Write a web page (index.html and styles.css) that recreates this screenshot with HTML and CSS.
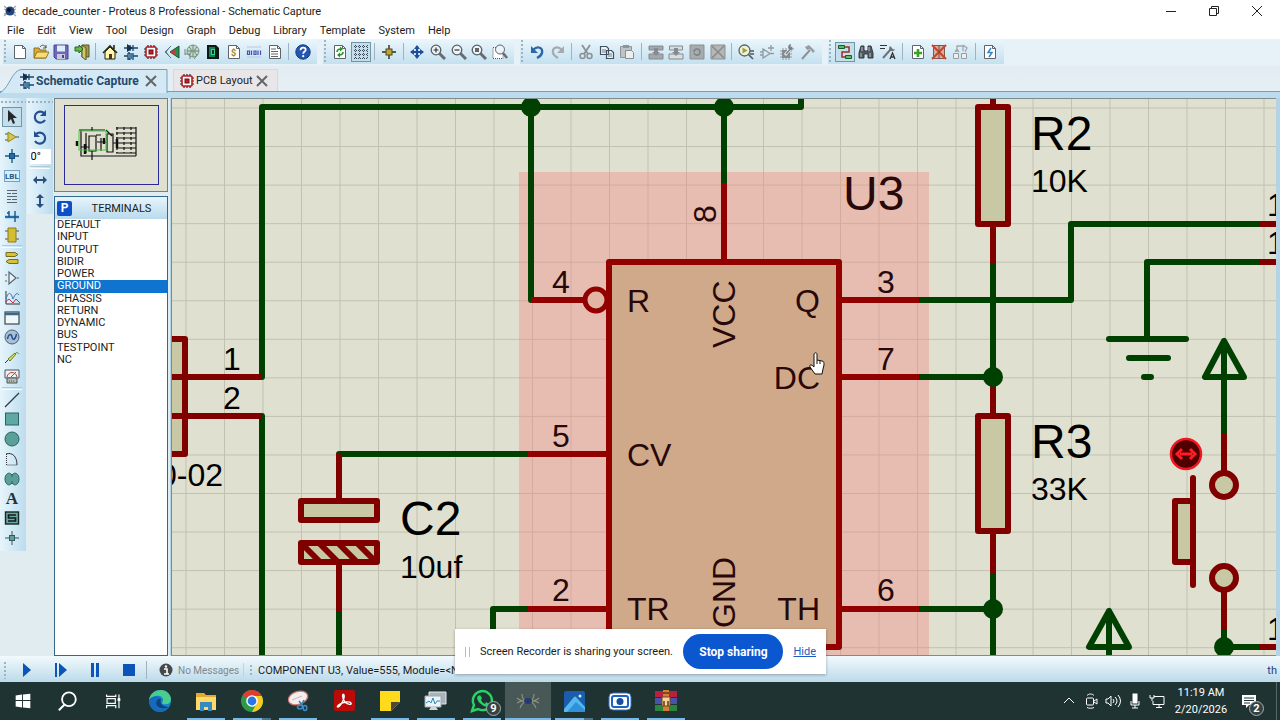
FILE: index.html
```html
<!DOCTYPE html>
<html lang="en">
<head>
    <meta charset="UTF-8">
    <title>decade_counter - Proteus 8 Professional - Schematic Capture</title>
    <link rel="stylesheet" href="styles.css">
</head>
<body>
<svg class="defs" width="0" height="0">
    <symbol id="parts" viewBox="0 0 16 16"><path d="M1 4h14M7 1v6M10 1v6M5 9v7M7 9v7M10 9v7M1 12h4M10 12h5M5 9h2M5 15h2" stroke="#1d4468" stroke-width="1.3" fill="none"/><path d="M4 0l6 4-6 4z" fill="#14304c"/><path d="M8 9h2v6H8z" fill="#2f7fb0"/></symbol>
    <symbol id="chip" viewBox="0 0 16 16"><path d="M5 1v14M8 1v14M11 1v14M1 5h14M1 8h14M1 11h14" stroke="#302020" stroke-width="1.2"/><rect x="3" y="3" width="10" height="10" rx="1" fill="#fff" stroke="#b41824" stroke-width="1.6"/><rect x="6" y="6" width="4" height="4" fill="#c41c2c" stroke="#701010"/></symbol>
    <symbol id="glass" viewBox="0 0 16 16"><path d="M9 9l6 6" stroke="#676c72" stroke-width="3"/><circle cx="6" cy="6" r="4.800" fill="#edf4f8" stroke="#596066" stroke-width="1.3"/></symbol>
    <symbol id="page" viewBox="0 0 16 16"><path d="M2.500 1.500h8l3 3v10h-11z" fill="#fff" stroke="#606468"/><path d="M10.500 1.500v3h3" fill="none" stroke="#606468"/></symbol>
</svg>
<header class="titlebar">
    <svg class="icon" viewBox="0 0 16 16"><path d="M2 3l12 10M14 3L2 13M2 6l12 4M2 11l12-5" stroke="#9aa8b4" stroke-width="1.3"/><circle cx="8" cy="8" r="4.500" fill="#23447c"/><circle cx="7" cy="7" r="2" fill="#0a1838"/></svg>
    <h1>decade_counter - Proteus 8 Professional - Schematic Capture</h1>
    <div class="window-buttons">
        <button aria-label="Minimize"><svg viewBox="0 0 10 10"><path d="M0 5.500h10"/></svg></button>
        <button aria-label="Restore"><svg viewBox="0 0 10 10"><path d="M.5 2.500h7v7h-7zM2.500 2.500v-2h7v7h-2"/></svg></button>
        <button aria-label="Close"><svg viewBox="0 0 10 10"><path d="M0 0l10 10M10 0L0 10"/></svg></button>
    </div>
</header>
<nav class="menu">
    <button>File</button><button>Edit</button><button>View</button><button>Tool</button><button>Design</button><button>Graph</button><button>Debug</button><button>Library</button><button>Template</button><button>System</button><button>Help</button>
</nav>

<div class="toolbars">
    <div class="tools tools-project">
        <button aria-label="New"><svg class="icon" viewBox="0 0 16 16"><use href="#page"/></svg></button>
        <button aria-label="Open"><svg class="icon" viewBox="0 0 16 16"><path d="M1 14V4h5l1 2h6v8z" fill="#d9ab35" stroke="#90701c"/><path d="M1 14l3-6h12l-3 6z" fill="#f8dc78" stroke="#96741e"/><path d="M7 3c2-3 5-2 6 1M13 1v3h-3" fill="none" stroke="#555"/></svg></button>
        <button aria-label="Save"><svg class="icon" viewBox="0 0 16 16"><path d="M1 1h14v14H3l-2-2z" fill="#7068b4" stroke="#4a4494"/><path d="M4 1.500h8v6H4z" fill="#dceefa"/><path d="M4 10h8v5H4z" fill="#c8c8de"/><path d="M9 11h2v3H9z" fill="#484090"/></svg></button>
        <button aria-label="Import"><svg class="icon" viewBox="0 0 16 16"><path d="M8 1h7v12H8z" fill="#a09a48" stroke="#555428"/><path d="M8 1l4 3v12l-4-3z" fill="#d0c86a" stroke="#555428"/><path d="M1 3h4V1l4 4-4 4V7H1z" fill="#68b848" stroke="#2d6520"/></svg></button>
        <span class="sep"></span>
        <button aria-label="Home"><svg class="icon" viewBox="0 0 16 16"><path d="M3 8v7h10V8L8 3z" fill="#fff6b0" stroke="#25200c"/><path d="M1 9l7-7 7 7M12 5V1" fill="none" stroke="#302b12" stroke-width="1.600"/><path d="M7 10h3v5H7z" fill="#473818"/></svg></button>
        <button aria-label="Schematic"><svg class="icon"><use href="#parts"/></svg></button>
        <button aria-label="PCB"><svg class="icon"><use href="#chip"/></svg></button>
        <button aria-label="3D view"><svg class="icon" viewBox="0 0 16 16"><path d="M7 2L1 8l6 6M5 4L2 8l3 4" fill="none" stroke="#5c7088"/><path d="M6 8l9-6v12z" fill="#259048" stroke="#245038"/><path d="M6 8l5-2v5z" fill="#c83838"/></svg></button>
        <button aria-label="Gerber"><svg class="icon" viewBox="0 0 16 16"><circle cx="9" cy="7" r="6" fill="#c5d8cc" stroke="#7d9485"/><path d="M3 7h12M9 1v12M5 3c3 2 3 6 0 8M13 3c-3 2-3 6 0 8M1 10h5v5M1 5v6M10 15l4-5" fill="none" stroke="#6b8a78"/></svg></button>
        <button aria-label="Design explorer"><svg class="icon" viewBox="0 0 16 16"><path d="M2 1h9l3 3v11H2z" fill="#101814"/><path d="M4 3h6v10H4z" fill="#12825c"/><path d="M6 5h4v6H6z" fill="#30d890"/><path d="M7 6h2v4H7z" fill="#103828"/></svg></button>
        <button aria-label="Bill of materials"><svg class="icon" viewBox="0 0 16 16"><use href="#page"/><text x="5" y="12" class="dollar">$</text></svg></button>
        <button aria-label="Source code"><svg class="icon" viewBox="0 0 16 16"><path d="M1 3h14M1 13h14" stroke="#b8c8dc"/><path d="M1.500 7h2v3.500h-2zM5.500 6.500v4.500M8 7h2v3.500H8zM12 6.500v4.500M14.500 6.500v4.500" fill="none" stroke="#4850b0" stroke-width="1.200"/></svg></button>
        <button aria-label="Project notes"><svg class="icon" viewBox="0 0 16 16"><use href="#page"/><path d="M4 5h5M4 7.500h7M4 10h7M4 12.500h7" stroke="#666"/></svg></button>
        <span class="sep"></span>
        <button aria-label="Help"><svg class="icon" viewBox="0 0 16 16"><circle cx="8" cy="8" r="7.200" fill="#2356b4" stroke="#173878"/><path d="M5.500 6.200c0-3.600 5.200-3.200 5.200-.4 0 1.600-2.500 1.800-2.500 3.900" fill="none" stroke="#fff" stroke-width="1.800"/><circle cx="8.200" cy="12.200" r="1.100" fill="#fff"/></svg></button>
    </div>
    <div class="tools tools-view">
        <button aria-label="Redraw"><svg class="icon" viewBox="0 0 16 16"><use href="#page"/><path d="M5 8c0-3 2-3 4-3M11 8c0 3-2 3-4 3" fill="none" stroke="#269428" stroke-width="1.600"/><path d="M8 2.500L11 5 8 7.500zM8 8.500L5 11l3 2.500z" fill="#269428"/></svg></button>
        <button class="active" aria-label="Grid"><svg class="icon" viewBox="0 0 16 16"><path d="M1 2.500h14M1 6.500h14M1 10.500h14M1 14.500h14M2.500 1v14M6.500 1v14M10.500 1v14M14.500 1v14" stroke="#384858" stroke-dasharray="1 1"/></svg></button>
        <span class="sep"></span>
        <button aria-label="Origin"><svg class="icon" viewBox="0 0 16 16"><path d="M8 1v14M1 8h14" stroke="#302c18" stroke-width="1.400"/><rect x="5" y="5" width="6" height="6" fill="#bda632" stroke="#50481c"/></svg></button>
        <span class="sep"></span>
        <button aria-label="Pan"><svg class="icon" viewBox="0 0 16 16"><path d="M8 2v12M2 8h12" stroke="#1d4d9c" stroke-width="2.200"/><path d="M8 1l3 4H5zM8 15l3-4H5zM1 8l4-3v6zM15 8l-4-3v6z" fill="#1d4d9c"/></svg></button>
        <button aria-label="Zoom in"><svg class="icon" viewBox="0 0 16 16"><use href="#glass"/><path d="M3.500 6h5M6 3.500v5" stroke="#333" stroke-width="1.200"/></svg></button>
        <button aria-label="Zoom out"><svg class="icon" viewBox="0 0 16 16"><use href="#glass"/><path d="M3.500 6h5" stroke="#333" stroke-width="1.200"/></svg></button>
        <button aria-label="Zoom all"><svg class="icon" viewBox="0 0 16 16"><use href="#glass"/><rect x="4" y="4" width="4" height="4" fill="#666"/></svg></button>
        <button aria-label="Zoom area"><svg class="icon" viewBox="0 0 16 16"><path d="M1 3.500h10v11H1z" fill="#fff" stroke="#555" stroke-dasharray="1 1"/><path d="M11 9l4 5" stroke="#676c72" stroke-width="2.500"/><circle cx="8" cy="5.500" r="4.500" fill="#edf4f8" stroke="#596066"/></svg></button>
    </div>
    <div class="tools tools-edit">
        <button aria-label="Undo"><svg class="icon" viewBox="0 0 16 16"><path d="M4 6c5-5 10-2 9 3-1 3-3 4-5 5" fill="none" stroke="#2c67a8" stroke-width="2.400"/><path d="M2 2v7h7z" fill="#2c67a8"/></svg></button>
        <button aria-label="Redo"><svg class="icon" viewBox="0 0 16 16"><path d="M12 6C7 1 2 4 3 9c1 3 3 4 5 5" fill="none" stroke="#a3abb0" stroke-width="2.200"/><path d="M14 2v7H7z" fill="#a3abb0"/></svg></button>
        <span class="sep"></span>
        <button aria-label="Cut"><svg class="icon" viewBox="0 0 16 16"><path d="M4 1l6 9M12 1L6 10" stroke="#8a9094" stroke-width="1.800"/><circle cx="4.500" cy="12" r="2.500" fill="none" stroke="#8a9094" stroke-width="1.500"/><circle cx="11.500" cy="12" r="2.500" fill="none" stroke="#8a9094" stroke-width="1.500"/></svg></button>
        <button aria-label="Copy"><svg class="icon" viewBox="0 0 16 16"><path d="M1.500 2.500h6l2 2v6h-8zM7.500 6.500h5l2 2v6h-7z" fill="#eef3f6" stroke="#3f5060" stroke-width="1.200"/><path d="M3 6h4M3 8h4M9 10h4M9 12h4" stroke="#6d7c88"/></svg></button>
        <button aria-label="Paste"><svg class="icon" viewBox="0 0 16 16"><path d="M1.500 2.500h11v11h-11z" fill="#bfc3c3" stroke="#90969a"/><path d="M4 1h6v3H4z" fill="#8e9498"/><path d="M6.500 6.500h6l2 2v6h-8z" fill="#eee" stroke="#888e92"/></svg></button>
        <span class="sep"></span>
        <button aria-label="Block copy"><svg class="icon" viewBox="0 0 16 16"><path d="M1 2h14v4H1zM1 10h14v5H1z" fill="#a2a8ac" stroke="#848a8e"/><path d="M6 4h4v4h2l-4 4-4-4h2z" fill="#858b90"/></svg></button>
        <button aria-label="Block move"><svg class="icon" viewBox="0 0 16 16"><path d="M1.500 2h13v4h-13zM1 10h14v5H1z" fill="#d9dee0" stroke="#848a8e"/><path d="M6 4h4v4h2l-4 4-4-4h2z" fill="#858b90"/></svg></button>
        <button aria-label="Block rotate"><svg class="icon" viewBox="0 0 16 16"><path d="M1 1h14v14H1z" fill="#a7acaf" stroke="#8a8f93"/><path d="M5 8c0-4 6-4 6 0s-5 4-6 1" fill="none" stroke="#7d8387" stroke-width="1.600"/></svg></button>
        <button aria-label="Block delete"><svg class="icon" viewBox="0 0 16 16"><path d="M1 1h14v14H1z" fill="#b5b7b6" stroke="#8a8f93"/><path d="M2 2l12 12M14 2L2 14" stroke="#8b8b88" stroke-width="1.600"/></svg></button>
        <span class="sep"></span>
        <button aria-label="Pick parts"><svg class="icon" viewBox="0 0 16 16"><path d="M10 10l5 5M12 7h4M12 10h4" stroke="#50585e" stroke-width="1.600"/><circle cx="6.500" cy="6.500" r="5.500" fill="#edf2da" stroke="#59646a" stroke-width="1.300"/><path d="M4.500 3.500l5 3-5 3z" fill="#9aa232"/></svg></button>
        <button aria-label="Make device"><svg class="icon" viewBox="0 0 16 16"><path d="M4 5v9l7-4.500zM1 8h3M1 11h3M11 9.500h4M12 1v6M9 4h6" fill="none" stroke="#929aa0" stroke-width="1.300"/></svg></button>
        <button aria-label="Packaging tool"><svg class="icon" viewBox="0 0 16 16"><path d="M4 4v12M7 4v12M10 5v11M1 7h12M1 10h12M1 13h12" stroke="#92989c"/><path d="M3 6h8v8H3z" fill="#858b90"/><path d="M6 11l7-8" stroke="#e5e8e9" stroke-width="3"/><path d="M7 10l6-7" stroke="#80868a" stroke-width="1.500"/><path d="M12 0a3 3 0 103 4l-2 .5L11.500 3z" fill="#777e84"/></svg></button>
        <button aria-label="Decompose"><svg class="icon" viewBox="0 0 16 16"><path d="M2 15l8-9" stroke="#8d9296" stroke-width="2"/><path d="M5 3l4-2 6 6-2 2-3-4-3 1z" fill="#969ca0"/></svg></button>
    </div>
    <div class="tools tools-design">
        <button class="active" aria-label="Wire autorouter"><svg class="icon" viewBox="0 0 16 16"><path d="M6 3h6v5H5v5h6" fill="none" stroke="#a02c28" stroke-width="1.500"/><path d="M1.500 1.500h6v3h-6zM8.500 11.500h6v3h-6z" fill="#58c060" stroke="#185c28"/></svg></button>
        <button aria-label="Search"><svg class="icon" viewBox="0 0 16 16"><path d="M3 2h3v4l1 1h2l1-1V2h3l2 7v5h-5v-4H6v4H1V9z" fill="#4f5860" stroke="#343b42"/><path d="M3 9v4M12 9v4M4 3v4M11 3v4" stroke="#bcc4ca"/></svg></button>
        <button aria-label="Property tool"><svg class="icon" viewBox="0 0 16 16"><path d="M0 1.500h7M0 4.500h5" stroke="#333"/><path d="M3 14l8-9" stroke="#6c7276" stroke-width="2"/><path d="M10 2a3 3 0 105 3l-2 .5L12 4z" fill="#6c7276"/><path d="M10 15l2.500-6 2.500 6M11 13h3" fill="none" stroke="#333" stroke-width="1.300"/></svg></button>
        <span class="sep"></span>
        <button aria-label="New sheet"><svg class="icon" viewBox="0 0 16 16"><use href="#page"/><path d="M8 5v8M4 9h8" stroke="#36a423" stroke-width="2.600"/></svg></button>
        <button aria-label="Remove sheet"><svg class="icon" viewBox="0 0 16 16"><path d="M2.500 1.500h11v13h-11z" fill="#d8ae9a" stroke="#80584c"/><path d="M1 1l14 14M15 1L1 15" stroke="#c9442c" stroke-width="2"/><path d="M8 1v14" stroke="#90412e"/></svg></button>
        <button aria-label="Exit to parent"><svg class="icon" viewBox="0 0 16 16"><path d="M5 8V2h6v5M3 8l2-3 2 3M11 1l4 3-2 4" fill="none" stroke="#a0a6a9" stroke-width="1.300"/><path d="M1.500 9.500h5v5h-5zM9.500 9.500h5v5h-5z" fill="#eee" stroke="#979da0"/></svg></button>
        <span class="sep"></span>
        <button aria-label="Electrical rules"><svg class="icon" viewBox="0 0 16 16"><use href="#page"/><path d="M9 4L6 8.500h4L7 13" fill="none" stroke="#3488c8" stroke-width="1.500"/></svg></button>
    </div>
</div>

<div class="tabs">
    <div class="tab tab-current">
        <svg class="tab-shape" viewBox="0 0 168 24" preserveAspectRatio="none"><path d="M0 24C10 18 12 .5 22 .5H167V24" fill="#d4e9f5" stroke="#6fa0c0"/></svg>
        <svg class="icon"><use href="#parts"/></svg>
        <a href="#schematic">Schematic Capture</a>
        <button class="tab-close" aria-label="Close Schematic Capture"><svg viewBox="0 0 12 12"><path d="M1 1l10 10M11 1L1 11"/></svg></button>
    </div>
    <div class="tab tab-other">
        <svg class="icon"><use href="#chip"/></svg>
        <a href="#pcb">PCB Layout</a>
        <button class="tab-close" aria-label="Close PCB Layout"><svg viewBox="0 0 12 12"><path d="M1 1l10 10M11 1L1 11"/></svg></button>
    </div>
</div>

<main class="workspace">
    <div class="modes">
        <button class="active" aria-label="Selection"><svg class="icon" viewBox="0 0 16 16"><path d="M4 1v12l3-3 2 5 2-1-2-5h4z" fill="#24282c"/></svg></button>
        <button aria-label="Component"><svg class="icon" viewBox="0 0 16 16"><path d="M1 5h3M1 11h3M12 8h3" stroke="#5a5418"/><path d="M4 3l8 5-8 5z" fill="#d6c648" stroke="#948522"/></svg></button>
        <button aria-label="Junction"><svg class="icon" viewBox="0 0 16 16"><path d="M8 1v14M1 8h14" stroke="#1d5a80" stroke-width="1.400"/><rect x="5.500" y="5.500" width="5" height="5" fill="#1f6cac" stroke="#164a78"/></svg></button>
        <button aria-label="Wire label"><svg class="icon" viewBox="0 0 16 16"><rect x=".5" y="2.500" width="15" height="11" fill="#d9edf8" stroke="#1a5782" stroke-dasharray="1 1"/><text x="1" y="11" class="lbl">LBL</text></svg></button>
        <button aria-label="Text script"><svg class="icon" viewBox="0 0 16 16"><path d="M3 2.500h10M3 5.500h4M8 5.500h5M3 8.500h10M3 11.500h4M8 11.500h5M3 14.500h10" stroke="#5b656b" stroke-width="1.200"/></svg></button>
        <button aria-label="Bus"><svg class="icon" viewBox="0 0 16 16"><path d="M1 9h14" stroke="#1e70b0" stroke-width="2.400"/><path d="M5 3v6M11 3v11M3 5h2" stroke="#1a5480" stroke-width="1.400"/></svg></button>
        <button aria-label="Subcircuit"><svg class="icon" viewBox="0 0 16 16"><path d="M1 4h14M1 12h14" stroke="#555"/><path d="M4 1h8v14H4z" fill="#d2be30" stroke="#8a7820"/></svg></button>
        <span class="rule"></span>
        <button aria-label="Terminals"><svg class="icon" viewBox="0 0 16 16"><path d="M2 2.500h9l3 2-3 2H2zM5 9.500h9v4H5l-3-2z" fill="#d4c23a" stroke="#786b1c"/></svg></button>
        <button aria-label="Device pins"><svg class="icon" viewBox="0 0 16 16"><path d="M5 2v12l7-6zM1 5h2M1 11h2M13 8h2" fill="#e6f2f8" stroke="#58646c" stroke-width="1.200"/></svg></button>
        <button aria-label="Graph"><svg class="icon" viewBox="0 0 16 16"><path d="M2 1v13h14" fill="none" stroke="#333"/><path d="M2 9c3-9 5-6 7 0 2-5 4-7 6-4" fill="none" stroke="#3378a8"/><path d="M1 12l4-3 4 4 3-4 4 4" fill="none" stroke="#c22f46"/></svg></button>
        <button aria-label="Active popup"><svg class="icon" viewBox="0 0 16 16"><rect x="1" y="2" width="14" height="12" fill="#f1f6f8" stroke="#3b4850" stroke-width="1.200"/><path d="M1 4h14" stroke="#34698c" stroke-width="2.500"/></svg></button>
        <button aria-label="Generator"><svg class="icon" viewBox="0 0 16 16"><circle cx="8" cy="8" r="7" fill="#a8bfd4" stroke="#50606c"/><path d="M3.500 10c1-6 4-5 4.500-2s3 4 4.500-3" fill="none" stroke="#214d9c" stroke-width="1.500"/></svg></button>
        <button aria-label="Probe"><svg class="icon" viewBox="0 0 16 16"><path d="M1 14l4-4" stroke="#333"/><path d="M4 10l7-6 1 1-6 7z" fill="#e0e059" stroke="#6c7830"/><path d="M12 4c2-2 2 2 3 0" fill="none" stroke="#4b8f30"/></svg></button>
        <button aria-label="Instruments"><svg class="icon" viewBox="0 0 16 16"><path d="M1 1h14v8H1z" fill="#e9f2f5" stroke="#4a555c"/><path d="M3 8c1-6 9-6 10 0M7 8l5-5" fill="none" stroke="#ba3e34"/><path d="M3 9h10v5H3z" fill="#b5bcae" stroke="#4a555c"/><path d="M5 12h6" stroke="#555" stroke-dasharray="1 1"/></svg></button>
        <span class="rule"></span>
        <button aria-label="Line"><svg class="icon" viewBox="0 0 16 16"><path d="M1 15L15 1" stroke="#31383c" stroke-width="1.200"/></svg></button>
        <button aria-label="Box"><svg class="icon" viewBox="0 0 16 16"><rect x="1.500" y="2" width="13" height="12" fill="#5fa9a4" stroke="#2c6260"/></svg></button>
        <button aria-label="Circle"><svg class="icon" viewBox="0 0 16 16"><circle cx="8" cy="8" r="7" fill="#5a9f98" stroke="#2c6260"/></svg></button>
        <button aria-label="Arc"><svg class="icon" viewBox="0 0 16 16"><path d="M2 3c6-2 11 2 11 11" fill="none" stroke="#333"/><path d="M2.500 3v11H13" fill="none" stroke="#333" stroke-dasharray="1 1"/></svg></button>
        <button aria-label="Path"><svg class="icon" viewBox="0 0 16 16"><path d="M8 4c3-4 7-1 7 4s-4 8-7 4c-3 4-7 1-7-4s4-8 7-4z" fill="#5a9f98" stroke="#2c6260"/><path d="M8 4v2M8 10v2" stroke="#2c6260"/></svg></button>
        <button aria-label="Text" class="serif-a">A</button>
        <button aria-label="Symbol"><svg class="icon" viewBox="0 0 16 16"><rect x="1.500" y="2" width="13" height="12" fill="#6ba7a2" stroke="#142826" stroke-width="1.400"/><path d="M12 5H4.500v3h7v3H4" fill="none" stroke="#101c1c" stroke-width="1.600"/></svg></button>
        <button aria-label="Marker"><svg class="icon" viewBox="0 0 16 16"><path d="M8 1v14M1 8h14" stroke="#35585a"/><rect x="5.500" y="5.500" width="5" height="5" fill="#5aa29c" stroke="#35585a"/></svg></button>
    </div>

    <div class="rotate">
        <button aria-label="Rotate clockwise"><svg class="icon" viewBox="0 0 16 16"><path d="M13 11a5.500 5.500 0 11-1-7" fill="none" stroke="#264f92" stroke-width="2.200"/><path d="M14 1v6H8z" fill="#264f92"/></svg></button>
        <button aria-label="Rotate anticlockwise"><svg class="icon" viewBox="0 0 16 16"><path d="M3 11a5.500 5.500 0 101-7" fill="none" stroke="#264f92" stroke-width="2.200"/><path d="M2 1v6h6z" fill="#264f92"/></svg></button>
        <input type="text" value="0°" aria-label="Angle">
        <span class="rule"></span>
        <button aria-label="Mirror horizontally"><svg class="icon" viewBox="0 0 16 16"><path d="M4 8h8" stroke="#2d4f80" stroke-width="2"/><path d="M1 8l4-4v8zM15 8l-4-4v8z" fill="#2d4f80"/></svg></button>
        <button aria-label="Mirror vertically"><svg class="icon" viewBox="0 0 16 16"><path d="M8 4v8" stroke="#2d4f80" stroke-width="2"/><path d="M8 1l4 4H4zM8 15l4-4H4z" fill="#2d4f80"/></svg></button>
    </div>

    <aside class="side">
        <div class="overview">
            <svg viewBox="0 0 112 92">
                <rect x="9.500" y="6.500" width="94" height="79" fill="none" stroke="#2a2a9c"/>
                <g fill="none" stroke="#111" stroke-width="1.200">
                    <path d="M24 31h26M26 31v26h55M34 37h7v15h-7zM26 48h8M37 28v4M37 52v9M42 43h9M46 39v13M52 35h6v18h-6zM51 31l6 6M58 44h4M31 34v20M41 36h5"/>
                    <path d="M81 28v29M61 29h20M61 34h20M61 39h20M61 44h20M61 49h20M61 54h20"/>
                    <path d="M62 28v26M69 28v26M76 28v26" stroke-dasharray="3 2"/>
                    <path d="M22 42v5M30 45v10M49 39v6M62 40v9" stroke-width="2.500"/>
                </g>
                <rect x="24" y="32" width="27" height="19" fill="none" stroke="#45c845"/>
            </svg>
        </div>
        <section class="picker">
            <h2><button aria-label="Pick devices">P</button><span>TERMINALS</span></h2>
            <ul role="listbox" aria-label="Terminals">
                <li role="option">DEFAULT</li>
                <li role="option">INPUT</li>
                <li role="option">OUTPUT</li>
                <li role="option">BIDIR</li>
                <li role="option">POWER</li>
                <li role="option" class="selected" aria-selected="true">GROUND</li>
                <li role="option">CHASSIS</li>
                <li role="option">RETURN</li>
                <li role="option">DYNAMIC</li>
                <li role="option">BUS</li>
                <li role="option">TESTPOINT</li>
                <li role="option">NC</li>
            </ul>
        </section>
    </aside>

    <div class="sheet" id="schematic">
        <svg width="100%" height="100%">
            <defs>
                <pattern id="grid" x="13.500" y="8.500" width="38.500" height="38.550" patternUnits="userSpaceOnUse"><path d="M.5 0v39M0 .5h39" stroke="#bfc1b1" fill="none"/></pattern>
            </defs>
            <rect width="100%" height="100%" fill="url(#grid)"/>
            <g transform="translate(-172 -99)">
                <!-- selected part -->
                <rect class="highlight" x="519" y="172" width="410" height="600"/>
                <!-- wires -->
                <g class="wire">
                    <path d="M262 377V107H801V90M531 107V300M724 107V183"/>
                    <path d="M262 416V800M339 454H528M339 612V800M493 800V609H528"/>
                    <path d="M919 300H1071V224H1260M1147 339V262H1260"/>
                    <path d="M919 377H993M993 264V377M919 609H993M993 573V800"/>
                    <path d="M1109 339H1186M1129 358H1168M1144 377H1151"/>
                    <path d="M1224 341V433M1224 341L1205 377H1244ZM1109 611V800M1109 611L1089 647H1129Z"/>
                    <path d="M1224 630V647H1260"/>
                </g>
                <!-- parts and pins -->
                <g class="part">
                    <path d="M150 339H185V454H150Z"/>
                    <path d="M150 377H262M150 416H262"/>
                    <path d="M339 500V454M339 563V612"/>
                    <rect x="301" y="501" width="76" height="19"/>
                    <rect x="301" y="543" width="76" height="19"/>
                    <path class="hatch" d="M301 543l20 20M319 543l20 20M338 543l20 20M357 543l20 20"/>
                    <path d="M993 90V107M993 224V264M993 377V415M993 532V573"/>
                    <rect x="978" y="107" width="30" height="117"/>
                    <rect x="978" y="416" width="30" height="115"/>
                    <path d="M1260 224H1300M1260 262H1300M1260 647H1300"/>
                    <path d="M1224 433V474M1224 589V630"/>
                    <circle cx="1224" cy="485" r="12"/>
                    <circle cx="1224" cy="578" r="12"/>
                    <rect x="1175" y="501" width="18" height="61"/>
                    <path d="M1193 478V585" stroke-linecap="round"/>
                </g>
                <g class="part part-selected">
                    <rect x="609" y="262" width="230" height="385"/>
                    <path d="M724 183V262M531 300H584M528 454H609M528 609H609"/>
                    <path d="M839 300H919M839 377H919M839 609H919"/>
                    <circle class="bubble" cx="596" cy="300" r="11"/>
                </g>
                <g class="dot">
                    <circle cx="531" cy="107" r="10"/>
                    <circle cx="724" cy="107" r="10"/>
                    <circle cx="993" cy="377" r="10"/>
                    <circle cx="993" cy="609" r="10"/>
                    <circle cx="1224" cy="647" r="10"/>
                </g>
                <!-- switch actuator -->
                <circle cx="1186" cy="454" r="15" fill="#500000" stroke="#f01820" stroke-width="2.500"/>
                <path d="M1180 454h12M1182 449l-5 5 5 5M1190 449l5 5-5 5" fill="none" stroke="#ff1c24" stroke-width="3"/>
                <!-- labels -->
                <g class="name">
                    <text x="1031" y="150">R2</text>
                    <text x="1031" y="458">R3</text>
                    <text x="400" y="535">C2</text>
                    <text x="843" y="210" class="brown">U3</text>
                </g>
                <g class="value">
                    <text x="1031" y="192">10K</text>
                    <text x="1031" y="500">33K</text>
                    <text x="400" y="578">10uf</text>
                    <text x="223" y="370">1</text>
                    <text x="223" y="409">2</text>
                    <text x="159" y="486">0-02</text>
                    <text x="1267" y="216">1</text>
                    <text x="1267" y="254">1</text>
                    <text x="1267" y="640">1</text>
                </g>
                <g class="value brown">
                    <text x="552" y="293">4</text>
                    <text x="552" y="447">5</text>
                    <text x="552" y="601">2</text>
                    <text x="877" y="293">3</text>
                    <text x="877" y="370">7</text>
                    <text x="877" y="601">6</text>
                    <text x="627" y="312">R</text>
                    <text x="627" y="466">CV</text>
                    <text x="627" y="620">TR</text>
                    <text x="820" y="312" text-anchor="end">Q</text>
                    <text x="820" y="389" text-anchor="end">DC</text>
                    <text x="820" y="620" text-anchor="end">TH</text>
                    <text transform="translate(716 223) rotate(-90)">8</text>
                    <text transform="translate(735 348) rotate(-90)">VCC</text>
                    <text transform="translate(735 628) rotate(-90)">GND</text>
                </g>
                <path d="M814 354c1-2 3-1 3 0v6l5 1c2 0 2 2 2 4l-1 4-1 5h-7l-5-7c-1-2 1-3 3-1l1 1z" fill="#fff" stroke="#111"/>
                <path d="M817 360v4M820 361v3" stroke="#111"/>
            </g>
        </svg>
    </div>
</main>

<footer class="status">
    <div class="sim">
        <button aria-label="Run"><svg viewBox="0 0 14 14"><path d="M3 0l8 7-8 7z"/></svg></button>
        <button aria-label="Step"><svg viewBox="0 0 14 14"><path d="M1 0h2v14H1zM5 0l8 7-8 7z"/></svg></button>
        <button aria-label="Pause"><svg viewBox="0 0 14 14"><path d="M3 0h3v14H3zM8 0h3v14H8z"/></svg></button>
        <button aria-label="Stop"><svg viewBox="0 0 14 14"><path d="M1 1h12v12H1z"/></svg></button>
    </div>
    <div class="messages">
        <svg viewBox="0 0 14 14"><circle cx="7" cy="7" r="6.500" fill="#44494c"/><path d="M5 6h3v5M5 11h5" fill="none" stroke="#fff" stroke-width="1.600"/><circle cx="7" cy="3.500" r="1.200" fill="#fff"/></svg>
        <span>No Messages</span>
    </div>
    <p>COMPONENT U3, Value=555, Module=&lt;NONE&gt;</p>
    <span class="unit">th</span>
</footer>

<div class="taskbar">
    <button class="system" aria-label="Start"><svg viewBox="0 0 24 24"><path d="M4 6l7-1v6H4zM12 5l8-1v7h-8zM4 12h7v7l-7-1zM12 12h8v8l-8-1z" fill="#fff"/></svg></button>
    <button class="system" aria-label="Search"><svg viewBox="0 0 24 24"><circle cx="13" cy="10" r="7.500" fill="none" stroke="#fff" stroke-width="2"/><path d="M8 16l-6 6" stroke="#fff" stroke-width="2.200"/></svg></button>
    <button class="system" aria-label="Task view"><svg viewBox="0 0 24 24"><path d="M5 5v2h10V5M5 20v-3h10v3M5.500 9.500h9v5h-9zM18.500 5v15" fill="none" stroke="#fff" stroke-width="1.300"/><path d="M17 9h3v3h-3z" fill="#fff"/></svg></button>
    <div class="apps">
        <button aria-label="Edge"><svg viewBox="0 0 24 24"><circle cx="12" cy="12" r="11" fill="#1581cf"/><path d="M1 11C2 4 8 1 13 1c6 0 10 5 10 9 0 5-5 6-8 5-2-1 0-2 0-4 0-5-9-6-14 0z" fill="#49cc8e"/><path d="M1 11c5-6 12-3 12 0-3-1-5 1-5 4 0 4 5 7 13 3-4 6-14 7-18 0-1-2-2-4-2-7z" fill="#1868bd"/><path d="M13 10c-2-1-5 1-5 5 1 4 7 6 13 3-4 0-10-2-8-8z" fill="#0c447f"/></svg></button>
        <button class="open" aria-label="File Explorer"><svg viewBox="0 0 24 24"><path d="M2 4h8l2 2h10v15H2z" fill="#e2a82f"/><path d="M2 8h20v13H2z" fill="#ffd96a"/><path d="M6 13h12v9h-4v-4h-4v4H6z" fill="#368abc"/></svg></button>
        <button class="open stacked" aria-label="Chrome"><svg viewBox="0 0 24 24"><circle cx="12" cy="12" r="11" fill="#2d9a48"/><path d="M12 12L2.500 6.500A11 11 0 0121.500 6.500z" fill="#de3d31"/><path d="M12 7h9.800A11 11 0 0112 23l5-9z" fill="#f8ca24"/><circle cx="12" cy="12" r="5.800" fill="#fff"/><circle cx="12" cy="12" r="4.400" fill="#2a75e5"/></svg></button>
        <button class="open" aria-label="Snipping Tool"><svg viewBox="0 0 24 24"><ellipse cx="12" cy="9" rx="10" ry="6.500" transform="rotate(-18 12 9)" fill="#f4eded" stroke="#d07070" stroke-width="1.300"/><path d="M6 11l10-4" stroke="#bbb"/><path d="M13 12l4 5M18 11l-3 6" stroke="#3d7dab" stroke-width="1.600"/><ellipse cx="14" cy="18" rx="2.500" ry="1.800" fill="none" stroke="#398dcc" stroke-width="1.500"/><ellipse cx="19" cy="19" rx="1.800" ry="2.500" fill="none" stroke="#398dcc" stroke-width="1.500"/></svg></button>
        <button aria-label="Acrobat"><svg viewBox="0 0 24 24"><rect x="2" y="1" width="21" height="21" rx="2" fill="#b90b08"/><path d="M6 18c3-1 7-9 6-12-2-3-2 4 1 7 3 3 7 3 6 1-1-2-8-1-11 1-3 2-3 3-2 3z" fill="none" stroke="#fff" stroke-width="1.400"/></svg></button>
        <button class="open" aria-label="Sticky Notes"><svg viewBox="0 0 24 24"><path d="M2 2h20v11l-9 9H2z" fill="#ffdb1b"/><path d="M13 22v-9h9z" fill="#514631"/></svg></button>
        <button class="open" aria-label="Monitor"><svg viewBox="0 0 24 24"><path d="M5 3h17v12H5z" fill="#a8b4ba" stroke="#e5e9eb"/><path d="M1 7h16v11H1z" fill="#eaf4f8" stroke="#9caab1"/><path d="M2 14l3-2 2 2 2-5 2 6 2-3h3" fill="none" stroke="#3486b3"/><path d="M7 18h5l2 3H5z" fill="#cfd7da"/></svg></button>
        <button class="open" aria-label="WhatsApp"><svg viewBox="0 0 24 24"><path d="M2 22l2-6a9.500 9.500 0 114 4z" fill="none" stroke="#29d366" stroke-width="2.400"/><path d="M8 7l2-1 2 3-1 2c1 2 2 3 4 4l1-2 3 2c0 4-5 3-8 0-3-2-5-6-3-8z" fill="#29d366"/></svg><span class="badge">9</span></button>
        <button class="open current" aria-label="Proteus"><svg viewBox="0 0 24 24"><path d="M1 9c3 3 6 3 11 3s8 0 11-3M1 14c4-3 7-2 11-2s7-1 11 2M4 19c2-5 5-7 8-7s6 2 8 7M6 5c0 5 3 7 6 7s6-2 6-7" fill="none" stroke="#8c8f78" stroke-width="1.200"/><ellipse cx="12" cy="12" rx="4" ry="3" fill="#263a72"/></svg></button>
        <button class="open stacked" aria-label="Photos"><svg viewBox="0 0 24 24"><rect x="2" y="2" width="21" height="21" rx="2" fill="#1b5cac"/><path d="M2 20L12 8q1-1 2 0l9 10v5H2z" fill="#53b9ed"/><path d="M14 13l9 8v2H5z" fill="#2f90db"/><circle cx="18" cy="7" r="1.500" fill="#d3edfc"/></svg></button>
        <button class="open" aria-label="Screen Recorder"><svg viewBox="0 0 24 24"><rect x="1" y="4" width="22" height="17" rx="4" fill="#fff" stroke="#3672c4"/><rect x="4" y="7" width="16" height="11" rx="2" fill="none" stroke="#1965c3" stroke-width="2"/><circle cx="12" cy="12.500" r="3.500" fill="#1c4d9d"/></svg></button>
        <button class="open" aria-label="WinRAR"><svg viewBox="0 0 24 24"><path d="M1 2h22v6H1z" fill="#b8213d"/><path d="M1 9h22v6H1z" fill="#4954a8"/><path d="M1 16h22v6H1z" fill="#2b8540"/><path d="M9 1h6v21H9z" fill="#d08030"/><path d="M8 8h8v9H8z" fill="#f1d69a" stroke="#804020"/><path d="M10 12v5M14 12v5M9 4h6" stroke="#65361a" stroke-width="1.500"/></svg></button>
    </div>
    <div class="tray">
        <svg viewBox="0 0 16 16"><path d="M3 10l5-5 5 5"/></svg>
        <svg viewBox="0 0 16 16"><rect x="3.500" y="5" width="7" height="7" rx="1"/><path d="M11 8l3-2v5l-3-2M4 2.500c2-2 5-2 7 0M4 14.500c2 1 5 1 7 0"/></svg>
        <svg viewBox="0 0 16 16"><path d="M1 6h2l3-3v10l-3-3H1zM8 6q2 2 0 4M10 4q4 4 0 8M13 2q5 6 0 12"/></svg>
        <svg viewBox="0 0 16 16"><rect x="6" y="1" width="4" height="9" fill="#fff"/><path d="M4 8v4h8V8M8 12v3M5 15h6"/></svg>
        <svg viewBox="0 0 16 16"><path d="M5 3.500h10v8H4V8M7 14.500h6M10 12v3M1 2v3h4V2M3 5v3"/></svg>
        <time datetime="2026-02-20T11:19">11:19 AM<br>2/20/2026</time>
        <button aria-label="Notifications"><svg viewBox="0 0 16 16"><path d="M1 2h14v10H8l-3 3v-3H1z" fill="#fff" stroke="none"/><path d="M3 5h10M3 7.500h10M3 10h6" stroke="#1e3332"/></svg><span class="badge">2</span></button>
    </div>
</div>

<div class="share">
    <span class="grip"></span>
    <p>Screen Recorder is sharing your screen.</p>
    <button>Stop sharing</button>
    <a href="#hide">Hide</a>
</div>
</body>
</html>
```
FILE: styles.css
```css
* {
    box-sizing: border-box;
}
body {
    margin: 0;
    height: 100vh;
    display: flex;
    flex-direction: column;
    overflow: hidden;
    background: #e3eef2;
    color: #1c1c1c;
    font-family: Roboto, "Noto Sans", sans-serif;
    font-size: 11px;
}
button {
    padding: 0;
    border: 0;
    background: none;
    color: inherit;
    font: inherit;
}
h1, h2, p, ul {
    margin: 0;
    padding: 0;
    font-size: 11px;
    font-weight: normal;
}
svg {
    display: block;
    flex: none;
}
.defs {
    position: absolute;
}
.icon {
    width: 16px;
    height: 16px;
}
.dollar {
    font-size: 9px;
    font-weight: bold;
    fill: #9c8326;
}
.lbl {
    font-size: 8px;
    font-weight: bold;
    fill: #1a5782;
}

/* title and menu */
.titlebar {
    height: 22px;
    flex: none;
    display: flex;
    align-items: center;
    gap: 4px;
    padding-left: 2px;
    background: #fff;
}
.window-buttons {
    display: flex;
    margin-left: auto;
    margin-right: 2px;
}
.window-buttons button {
    width: 43px;
    height: 20px;
    display: grid;
    place-items: center;
}
.window-buttons svg {
    width: 10px;
    height: 10px;
    fill: none;
    stroke: #222;
}
.menu {
    height: 17px;
    flex: none;
    display: flex;
    gap: 1px;
    padding-left: 1px;
    background: #fff;
}
.menu button {
    padding: 0 6px;
    line-height: 17px;
}

/* toolbars */
.toolbars {
    height: 27px;
    flex: none;
    display: flex;
    align-items: flex-start;
    gap: 6px;
    padding-left: 3px;
    background: #e6f2f8;
}
.tools {
    height: 25px;
    display: flex;
    align-items: center;
    justify-content: space-between;
    padding: 0 4px 0 7px;
    background:
        radial-gradient(circle, #9ab4c4 1px, transparent 1px) 0 0 / 4px 4px repeat-y,
        linear-gradient(#eaf6fc, #c4e0f0);
}
.tools-project { width: 314px; }
.tools-view { width: 191px; }
.tools-edit { width: 302px; }
.tools-design { width: 176px; }
.tools button,
.modes button,
.rotate button {
    width: 20px;
    height: 20px;
    display: grid;
    place-items: center;
}
.tools .active,
.modes .active {
    background: #c5deeb;
    outline: 1px solid #7295a8;
    outline-offset: -1px;
}
.sep {
    width: 7px;
    height: 17px;
    background: linear-gradient(#9fb3be, #9fb3be) center / 1px 100% no-repeat;
}

/* tabs */
.tabs {
    height: 32px;
    flex: none;
    display: flex;
    align-items: flex-start;
    gap: 5px;
    padding-top: 3px;
    background: linear-gradient(#e2ecf1, #e6f0f4 25px, #6fa0c0 25px, #6fa0c0 26px, #bcdcee 26px);
}
.tab {
    height: 23px;
    display: flex;
    align-items: center;
    position: relative;
    white-space: nowrap;
}
.tab a {
    color: #222;
    text-decoration: none;
}
.tab .icon {
    position: relative;
}
.tab-current {
    width: 168px;
    gap: 1px;
    padding-left: 19px;
}
.tab-current a {
    position: relative;
    color: #24496c;
    font-size: 12px;
    font-weight: bold;
}
.tab-shape {
    position: absolute;
    inset: 0;
    width: 100%;
    height: 24px;
}
.tab-other {
    width: 105px;
    height: 22px;
    padding-left: 5px;
    gap: 1px;
    background: #e9e6ea;
    border: 1px solid #d3dade;
    border-bottom: 0;
}
.tab-close {
    position: relative;
    margin-left: auto;
    margin-right: 11px;
}
.tab-other .tab-close {
    margin-right: 9px;
}
.tab-close svg {
    width: 12px;
    height: 12px;
    stroke: #666;
    stroke-width: 2;
}

/* workspace */
.workspace {
    flex: 1;
    min-height: 0;
    display: flex;
    align-items: flex-start;
    padding: 0 4px 0 0;
    background: linear-gradient(to right, #e0ecef 170px, #b4d4e6 170px);
}
.modes,
.rotate {
    display: flex;
    flex-direction: column;
    align-items: center;
    justify-content: space-between;
    background:
        radial-gradient(circle, #9ab4c4 1px, transparent 1px) 0 2px / 4px 4px repeat-x,
        linear-gradient(to right, #e6f5fc, #bddcee);
}
.modes {
    width: 26px;
    height: 453px;
    padding: 9px 2px 3px 0;
}
.rotate {
    width: 26px;
    height: 116px;
    margin: 0 1px;
    padding: 9px 0 3px;
}
.rule {
    width: 20px;
    height: 3px;
    border-bottom: 1px solid #f8fcff;
    border-top: 1px solid #b2c9d5;
}
.rotate input {
    width: 21px;
    height: 15px;
    padding: 0 0 0 1px;
    border: 0;
    background: #fff;
    font: inherit;
}
.modes .serif-a {
    font: bold 17px/20px "Liberation Serif", serif;
    color: #263038;
}
.side {
    width: 114px;
    align-self: stretch;
    display: flex;
    flex-direction: column;
    gap: 4px;
}
.overview {
    height: 94px;
    border: 1px solid #738088;
    background: #e0e0d0;
}
.picker {
    flex: 1;
    border: 1px solid #34688a;
    background: #fff;
}
.picker h2 {
    height: 22px;
    display: flex;
    align-items: center;
    padding: 0 2px;
    background: linear-gradient(#e7f5fc, #b9daec);
}
.picker h2 button {
    width: 15px;
    height: 15px;
    border-radius: 2px;
    background: #0b50c8;
    color: #fff;
    font-size: 12px;
    font-weight: bold;
    line-height: 15px;
}
.picker h2 span {
    flex: 1;
    padding-left: 6px;
    text-align: center;
}
.picker ul {
    height: 147px;
    display: grid;
    grid-template-rows: repeat(12, 1fr);
    list-style: none;
}
.picker li {
    padding-left: 2px;
    line-height: 12px;
}
.picker .selected {
    background: #0f74d0;
    color: #fff;
}
.sheet {
    flex: 1;
    align-self: stretch;
    min-width: 0;
    margin-left: 3px;
    overflow: hidden;
    border: 1px solid #7f8c8c;
    border-right: 0;
    background: #e0e0d0;
}

/* schematic drawing */
.sheet text {
    font-family: "Liberation Sans", Arial, sans-serif;
}
.highlight {
    fill: #f08a80;
    fill-opacity: 0.4;
}
.wire {
    fill: none;
    stroke: #004000;
    stroke-width: 6;
    stroke-linejoin: round;
    stroke-linecap: round;
}
.dot {
    fill: #004000;
}
.part {
    fill: #c8c8a4;
    stroke: #800000;
    stroke-width: 6;
    stroke-linejoin: round;
}
.part-selected {
    fill: #d0a98a;
    stroke: #920000;
}
.bubble {
    fill: #e2b6a4;
    stroke-width: 5;
}
.hatch {
    stroke-width: 6;
}
.name {
    font-size: 48px;
}
.value {
    font-size: 32px;
}
.brown {
    fill: #280808;
}

/* status bar */
.status {
    height: 26px;
    flex: none;
    display: flex;
    align-items: center;
    padding: 2px 3px 0;
    background: linear-gradient(#f2fafd, #bcdaea);
    white-space: nowrap;
}
.sim {
    display: flex;
    padding-left: 7px;
    border-right: 1px solid #9fb3be;
    background: radial-gradient(circle, #9ab4c4 1px, transparent 1px) 0 0 / 4px 4px repeat-y;
}
.sim button {
    width: 34px;
    height: 18px;
    display: grid;
    place-items: center;
}
.sim svg {
    width: 14px;
    height: 14px;
    fill: #0b55b8;
}
.messages {
    width: 97px;
    display: flex;
    align-items: center;
    gap: 5px;
    padding-left: 12px;
    border-right: 1px solid #c2d2da;
    color: #81898e;
    font-size: 10px;
}
.messages svg {
    width: 14px;
    height: 14px;
}
.status p {
    margin-left: 5px;
    padding-left: 9px;
    background: radial-gradient(circle, #9ab4c4 1px, transparent 1px) 0 0 / 4px 4px repeat-y;
}
.unit {
    margin-left: auto;
    color: #2c3c78;
}

/* taskbar */
.taskbar {
    height: 38px;
    flex: none;
    display: flex;
    background: #1e3332;
    color: #fff;
}
.taskbar button {
    position: relative;
    width: 46px;
    display: grid;
    place-items: center;
}
.taskbar .system {
    width: 45px;
}
.taskbar button svg {
    width: 22px;
    height: 22px;
}
.apps {
    display: flex;
    margin-left: 2px;
}
.taskbar .apps svg {
    width: 24px;
    height: 24px;
}
.open {
    background: linear-gradient(#76b9ed, #76b9ed) center bottom / 38px 2px no-repeat;
}
.stacked {
    background: linear-gradient(to right, #76b9ed 29px, #4c7590 29px) center bottom / 38px 2px no-repeat;
}
.current {
    background: linear-gradient(#76b9ed, #76b9ed) center bottom / 46px 2px no-repeat #485857;
}
.badge {
    position: absolute;
    right: 4px;
    bottom: 4px;
    width: 15px;
    height: 15px;
    border: 1px solid #a5adad;
    border-radius: 50%;
    background: #344342;
    font-weight: bold;
    line-height: 13px;
    text-align: center;
}
.tray {
    display: flex;
    align-items: center;
    gap: 6px;
    margin-left: auto;
    margin-right: 3px;
    padding-right: 12px;
    border-right: 1px solid #586967;
}
.tray > svg {
    width: 16px;
    height: 16px;
    fill: none;
    stroke: #fff;
}
.tray time {
    width: 54px;
    margin-left: 3px;
    line-height: 17px;
    text-align: center;
}
.tray button {
    width: 30px;
    height: 38px;
}
.tray .badge {
    right: 0;
}
.taskbar .tray button svg {
    width: 16px;
    height: 16px;
}

/* screen sharing notice */
.share {
    position: absolute;
    left: 50%;
    bottom: 46px;
    width: 371px;
    height: 45px;
    margin-left: -185px;
    display: flex;
    align-items: center;
    padding: 0 10px;
    background: #fff;
    box-shadow: 0 1px 3px rgba(0, 0, 0, 0.3);
    white-space: nowrap;
}
.grip {
    width: 5px;
    height: 10px;
    margin-right: 10px;
    border: 1px solid #bbb;
    border-width: 0 1px;
}
.share button {
    width: 100px;
    height: 35px;
    margin: 0 10px 0 auto;
    border-radius: 18px;
    background: #0b57d0;
    color: #fff;
    font-size: 12px;
    font-weight: bold;
}
.share a {
    color: #1c5cc0;
}
```
